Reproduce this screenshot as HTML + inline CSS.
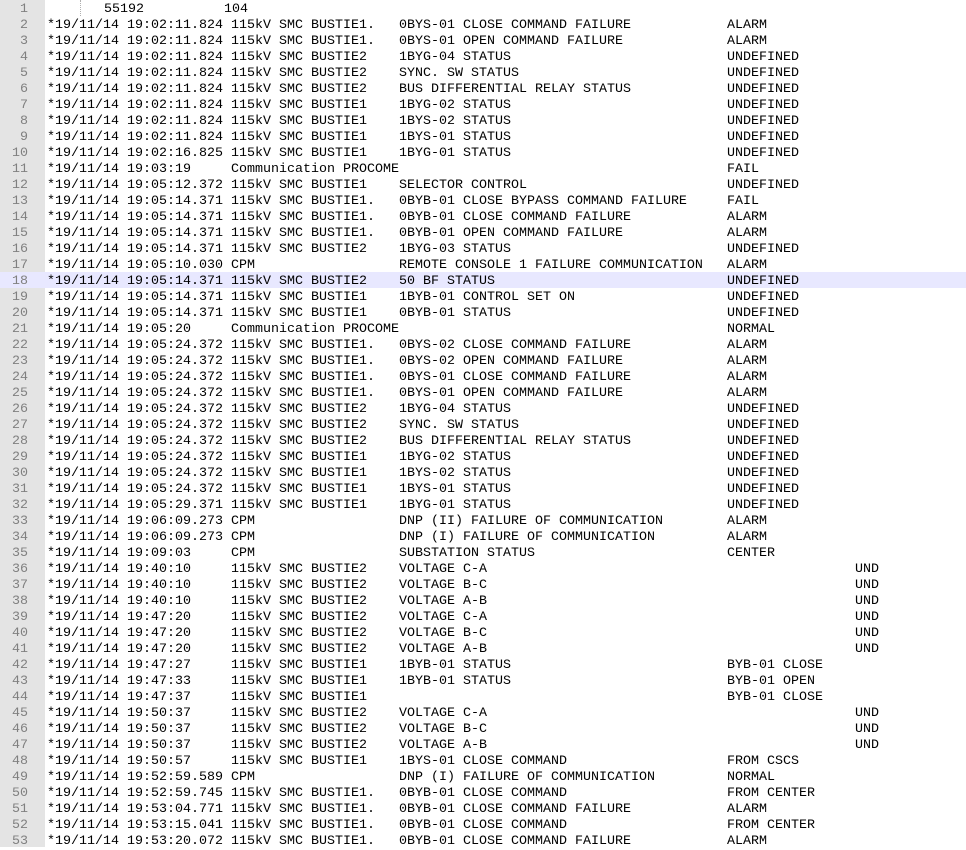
<!DOCTYPE html>
<html><head><meta charset="utf-8"><style>
html,body{margin:0;padding:0;background:#fff;width:966px;height:847px;overflow:hidden}
#g{position:absolute;left:0;top:0;width:45px;height:847px;background:#e4e4e4}
.r{position:absolute;left:0;height:16px;width:966px;font-family:"Liberation Mono","Courier New",monospace;font-size:13.33px;line-height:16px;color:#000;white-space:pre}
.r i{position:absolute;right:938px;font-style:normal;color:#808080;top:2px}
.r span{position:absolute;top:2px}
.a{left:47px}.b{left:231px}.c{left:399px}.d{left:727px}.e{left:855px}
.hl{background:#e8e8ff}
#guide{position:absolute;left:80px;top:0;height:16px;border-left:1px dotted #b0b0b0}
</style></head><body>
<div id="g"></div>
<div id="rows"></div>
<script>
var D=[
[],
["*19/11/14 19:02:11.824","115kV SMC BUSTIE1.","0BYS-01 CLOSE COMMAND FAILURE","ALARM"],
["*19/11/14 19:02:11.824","115kV SMC BUSTIE1.","0BYS-01 OPEN COMMAND FAILURE","ALARM"],
["*19/11/14 19:02:11.824","115kV SMC BUSTIE2","1BYG-04 STATUS","UNDEFINED"],
["*19/11/14 19:02:11.824","115kV SMC BUSTIE2","SYNC. SW STATUS","UNDEFINED"],
["*19/11/14 19:02:11.824","115kV SMC BUSTIE2","BUS DIFFERENTIAL RELAY STATUS","UNDEFINED"],
["*19/11/14 19:02:11.824","115kV SMC BUSTIE1","1BYG-02 STATUS","UNDEFINED"],
["*19/11/14 19:02:11.824","115kV SMC BUSTIE1","1BYS-02 STATUS","UNDEFINED"],
["*19/11/14 19:02:11.824","115kV SMC BUSTIE1","1BYS-01 STATUS","UNDEFINED"],
["*19/11/14 19:02:16.825","115kV SMC BUSTIE1","1BYG-01 STATUS","UNDEFINED"],
["*19/11/14 19:03:19","Communication PROCOME","","FAIL"],
["*19/11/14 19:05:12.372","115kV SMC BUSTIE1","SELECTOR CONTROL","UNDEFINED"],
["*19/11/14 19:05:14.371","115kV SMC BUSTIE1.","0BYB-01 CLOSE BYPASS COMMAND FAILURE","FAIL"],
["*19/11/14 19:05:14.371","115kV SMC BUSTIE1.","0BYB-01 CLOSE COMMAND FAILURE","ALARM"],
["*19/11/14 19:05:14.371","115kV SMC BUSTIE1.","0BYB-01 OPEN COMMAND FAILURE","ALARM"],
["*19/11/14 19:05:14.371","115kV SMC BUSTIE2","1BYG-03 STATUS","UNDEFINED"],
["*19/11/14 19:05:10.030","CPM","REMOTE CONSOLE 1 FAILURE COMMUNICATION","ALARM"],
["*19/11/14 19:05:14.371","115kV SMC BUSTIE2","50 BF STATUS","UNDEFINED"],
["*19/11/14 19:05:14.371","115kV SMC BUSTIE1","1BYB-01 CONTROL SET ON","UNDEFINED"],
["*19/11/14 19:05:14.371","115kV SMC BUSTIE1","0BYB-01 STATUS","UNDEFINED"],
["*19/11/14 19:05:20","Communication PROCOME","","NORMAL"],
["*19/11/14 19:05:24.372","115kV SMC BUSTIE1.","0BYS-02 CLOSE COMMAND FAILURE","ALARM"],
["*19/11/14 19:05:24.372","115kV SMC BUSTIE1.","0BYS-02 OPEN COMMAND FAILURE","ALARM"],
["*19/11/14 19:05:24.372","115kV SMC BUSTIE1.","0BYS-01 CLOSE COMMAND FAILURE","ALARM"],
["*19/11/14 19:05:24.372","115kV SMC BUSTIE1.","0BYS-01 OPEN COMMAND FAILURE","ALARM"],
["*19/11/14 19:05:24.372","115kV SMC BUSTIE2","1BYG-04 STATUS","UNDEFINED"],
["*19/11/14 19:05:24.372","115kV SMC BUSTIE2","SYNC. SW STATUS","UNDEFINED"],
["*19/11/14 19:05:24.372","115kV SMC BUSTIE2","BUS DIFFERENTIAL RELAY STATUS","UNDEFINED"],
["*19/11/14 19:05:24.372","115kV SMC BUSTIE1","1BYG-02 STATUS","UNDEFINED"],
["*19/11/14 19:05:24.372","115kV SMC BUSTIE1","1BYS-02 STATUS","UNDEFINED"],
["*19/11/14 19:05:24.372","115kV SMC BUSTIE1","1BYS-01 STATUS","UNDEFINED"],
["*19/11/14 19:05:29.371","115kV SMC BUSTIE1","1BYG-01 STATUS","UNDEFINED"],
["*19/11/14 19:06:09.273","CPM","DNP (II) FAILURE OF COMMUNICATION","ALARM"],
["*19/11/14 19:06:09.273","CPM","DNP (I) FAILURE OF COMMUNICATION","ALARM"],
["*19/11/14 19:09:03","CPM","SUBSTATION STATUS","CENTER"],
["*19/11/14 19:40:10","115kV SMC BUSTIE2","VOLTAGE C-A","","UND"],
["*19/11/14 19:40:10","115kV SMC BUSTIE2","VOLTAGE B-C","","UND"],
["*19/11/14 19:40:10","115kV SMC BUSTIE2","VOLTAGE A-B","","UND"],
["*19/11/14 19:47:20","115kV SMC BUSTIE2","VOLTAGE C-A","","UND"],
["*19/11/14 19:47:20","115kV SMC BUSTIE2","VOLTAGE B-C","","UND"],
["*19/11/14 19:47:20","115kV SMC BUSTIE2","VOLTAGE A-B","","UND"],
["*19/11/14 19:47:27","115kV SMC BUSTIE1","1BYB-01 STATUS","BYB-01 CLOSE"],
["*19/11/14 19:47:33","115kV SMC BUSTIE1","1BYB-01 STATUS","BYB-01 OPEN"],
["*19/11/14 19:47:37","115kV SMC BUSTIE1","","BYB-01 CLOSE"],
["*19/11/14 19:50:37","115kV SMC BUSTIE2","VOLTAGE C-A","","UND"],
["*19/11/14 19:50:37","115kV SMC BUSTIE2","VOLTAGE B-C","","UND"],
["*19/11/14 19:50:37","115kV SMC BUSTIE2","VOLTAGE A-B","","UND"],
["*19/11/14 19:50:57","115kV SMC BUSTIE1","1BYS-01 CLOSE COMMAND","FROM CSCS"],
["*19/11/14 19:52:59.589","CPM","DNP (I) FAILURE OF COMMUNICATION","NORMAL"],
["*19/11/14 19:52:59.745","115kV SMC BUSTIE1.","0BYB-01 CLOSE COMMAND","FROM CENTER"],
["*19/11/14 19:53:04.771","115kV SMC BUSTIE1.","0BYB-01 CLOSE COMMAND FAILURE","ALARM"],
["*19/11/14 19:53:15.041","115kV SMC BUSTIE1.","0BYB-01 CLOSE COMMAND","FROM CENTER"],
["*19/11/14 19:53:20.072","115kV SMC BUSTIE1.","0BYB-01 CLOSE COMMAND FAILURE","ALARM"]
];
var cls=["a","b","c","d","e"],h="";
D.forEach(function(r,i){
 h+='<div class="r'+(i==17?' hl':'')+'" style="top:'+(i*16)+'px"><i>'+(i+1)+'</i>';
 if(i==0)h+='<span style="left:104px">55192</span><span style="left:224px">104</span>';
 r.forEach(function(t,j){if(t)h+='<span class="'+cls[j]+'">'+t+'</span>';});
 h+='</div>';
});
document.getElementById('rows').innerHTML=h+'<div id="guide"></div>';
</script>
</body></html>
